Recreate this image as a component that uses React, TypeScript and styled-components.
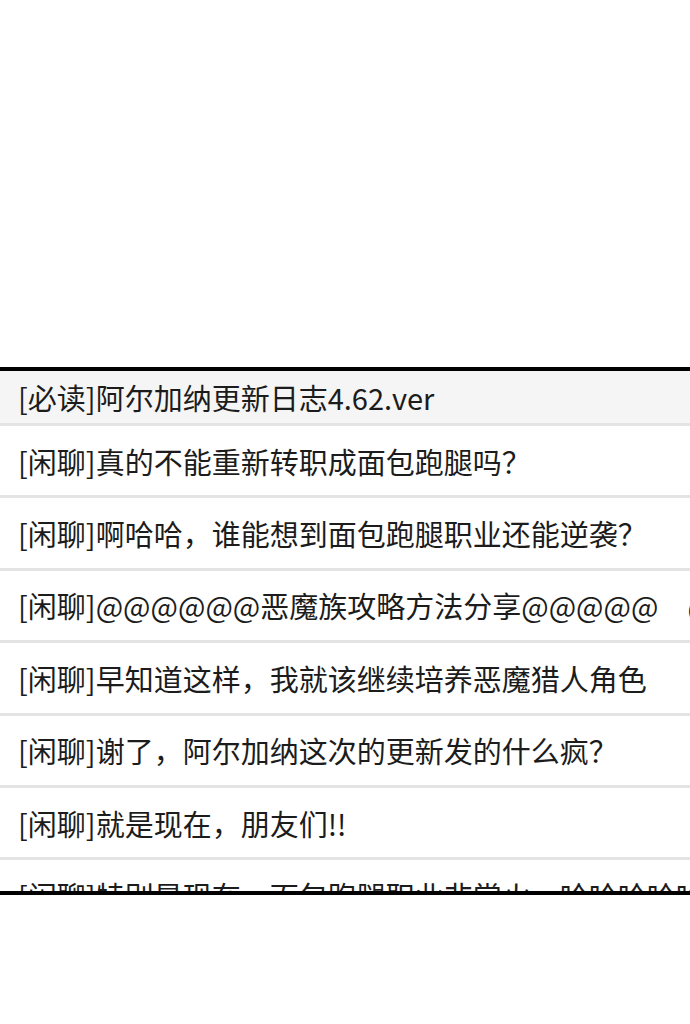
import React from "react";
import styled, { createGlobalStyle } from "styled-components";

const GlobalStyle = createGlobalStyle`
  html, body {
    margin: 0;
    padding: 0;
    background: #ffffff;
  }
  body {
    font-family: "Noto Sans CJK SC", "Noto Sans", sans-serif;
  }
`;

const posts = [
  { tag: "必读", title: "阿尔加纳更新日志4.62.ver", pinned: true },
  { tag: "闲聊", title: "真的不能重新转职成面包跑腿吗？" },
  { tag: "闲聊", title: "啊哈哈，谁能想到面包跑腿职业还能逆袭？" },
  { tag: "闲聊", title: "@@@@@@恶魔族攻略方法分享@@@@@　@@@@@" },
  { tag: "闲聊", title: "早知道这样，我就该继续培养恶魔猎人角色" },
  { tag: "闲聊", title: "谢了，阿尔加纳这次的更新发的什么疯？" },
  { tag: "闲聊", title: "就是现在，朋友们!!" },
  { tag: "闲聊", title: "特别是现在，面包跑腿职业非常火，哈哈哈哈哈哈" },
];

export default function App() {
  return (
    <>
      <GlobalStyle />
      <Page>
        <Board>
          {posts.map((post, i) => (
            <Row key={i} pinned={post.pinned}>
              <Title>
                [{post.tag}]{post.title}
              </Title>
            </Row>
          ))}
        </Board>
      </Page>
    </>
  );
}

const Page = styled.div`
  width: 690px;
  height: 1024px;
  padding-top: 367px;
  box-sizing: border-box;
  background: #ffffff;
`;

const Board = styled.div`
  height: 528px;
  box-sizing: border-box;
  border-top: 4px solid #000000;
  border-bottom: 4px solid #000000;
  overflow: hidden;
  display: flex;
  flex-direction: column;
`;

const Row = styled.div<{ pinned?: boolean }>`
  flex-shrink: 0;
  height: ${(props) => (props.pinned ? "55px" : "72.4px")};
  box-sizing: border-box;
  display: flex;
  align-items: center;
  padding-left: 18px;
  overflow: hidden;
  background: ${(props) => (props.pinned ? "#f5f5f5" : "#ffffff")};
  border-bottom: 3px solid #e4e4e4;
`;

const Title = styled.div`
  font-size: 29px;
  line-height: 40px;
  color: #1c1c1c;
  white-space: nowrap;
`;
